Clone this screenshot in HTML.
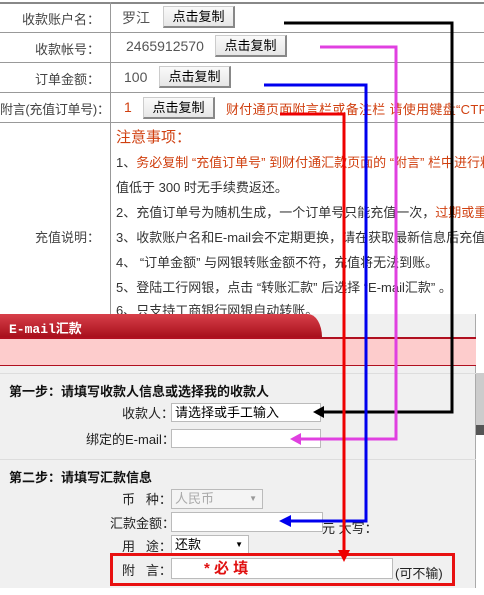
<!DOCTYPE html>
<html><head><meta charset="utf-8"><style>
*{margin:0;padding:0;box-sizing:border-box}
body{width:484px;height:595px;overflow:hidden;background:#fff;position:relative;font-family:"Liberation Sans","Noto Sans CJK SC","WenQuanYi Zen Hei",sans-serif;font-size:12px;color:#333}
.a{position:absolute;white-space:nowrap}
.hl{position:absolute;height:1px;background:#999;left:0;width:484px}
.btn{position:absolute;height:22px;width:72px;background:linear-gradient(#fafafa,#e6e6e6);border:1px solid #ccc;border-right:2px solid #888;border-bottom:2px solid #888;font-size:13px;color:#000;text-align:center;line-height:19px}
.lbl{position:absolute;right:384px;font-size:13px;color:#444;white-space:nowrap}
.r{color:#d04010}
.inp{position:absolute;background:#fff;border:1px solid #bbb;height:19px;font-size:13px;line-height:17px;padding-left:3px;color:#000;white-space:nowrap}
.l2{position:absolute;font-size:13px;color:#222;white-space:nowrap}
.n{font-size:13px}
</style></head><body>
<div class="hl" style="top:2px;background:#888;height:2px"></div>
<div class="hl" style="top:32px"></div>
<div class="hl" style="top:62px"></div>
<div class="hl" style="top:92px"></div>
<div class="hl" style="top:122px"></div>
<div style="position:absolute;left:110px;top:2px;width:1px;height:312px;background:#999"></div>
<div class="lbl" style="top:9px">收款账户名：</div>
<div class="lbl" style="top:39px">收款帐号：</div>
<div class="lbl" style="top:69px">订单金额：</div>
<div class="a" style="left:0;top:99px;font-size:13px;color:#444;letter-spacing:-0.3px">附言(充值订单号)：</div>
<div class="lbl" style="top:227px">充值说明：</div>
<div class="a" style="left:122px;top:8px;font-size:14px;color:#555">罗江</div>
<div class="btn" style="left:163px;top:6px">点击复制</div>
<div class="a" style="left:126px;top:38px;font-size:14px;color:#555">2465912570</div>
<div class="btn" style="left:215px;top:35px">点击复制</div>
<div class="a" style="left:124px;top:69px;font-size:14px;color:#555">100</div>
<div class="btn" style="left:159px;top:66px">点击复制</div>
<div class="a r" style="left:124px;top:99px;font-size:14px">1</div>
<div class="btn" style="left:143px;top:97px">点击复制</div>
<div class="a r" style="left:226px;top:99px;font-size:13px;letter-spacing:0.3px">财付通页面附言栏或备注栏 请使用键盘“CTRL+V”</div>
<div class="a r" style="left:116px;top:126px;font-size:15px">注意事项：</div>
<div class="a n" style="left:116px;top:152px">1、<span class="r">务必复制 “充值订单号” 到财付通汇款页面的 “附言” 栏中进行粘贴</span></div>
<div class="a n" style="left:116px;top:177px">值低于 300 时无手续费返还。</div>
<div class="a n" style="left:116px;top:202px">2、充值订单号为随机生成，一个订单号只能充值一次，<span class="r">过期或重复使用</span></div>
<div class="a n" style="left:116px;top:227px">3、收款账户名和E-mail会不定期更换，请在获取最新信息后充值，否则</div>
<div class="a n" style="left:116px;top:252px">4、 “订单金额” 与网银转账金额不符，充值将无法到账。</div>
<div class="a n" style="left:116px;top:277px">5、登陆工行网银，点击 “转账汇款” 后选择 “E-mail汇款” 。</div>
<div class="a n" style="left:116px;top:300px">6、只支持工商银行网银自动转账。</div>

<div style="position:absolute;left:0;top:314px;width:476px;height:274px;background:#f0f0f0;border-right:1px solid #aaa"></div>
<div style="position:absolute;left:476px;top:373px;width:8px;height:52px;background:#ccc"></div>
<div style="position:absolute;left:476px;top:425px;width:8px;height:10px;background:#555"></div>
<div style="position:absolute;left:0;top:314px;width:322px;height:23px;background:linear-gradient(#d8404a,#a8101c);border-top-right-radius:14px 23px"></div>
<div class="a" style="left:9px;top:318px;color:#fff;font-weight:bold;font-size:13px;font-family:'Liberation Mono','Noto Sans CJK SC',monospace">E-mail汇款</div>
<div style="position:absolute;left:0;top:337px;width:476px;height:29px;background:#fdcccc;border-top:2px solid #b01020;border-bottom:1px solid #b01020"></div>
<div style="position:absolute;left:0;top:373px;width:476px;height:1px;background:#ddd"></div>
<div class="a" style="left:9px;top:381px;font-weight:bold;font-size:13px;color:#111">第一步：请填写收款人信息或选择我的收款人</div>
<div class="l2" style="left:122px;top:403px">收款人：</div>
<div class="inp" style="left:171px;top:403px;width:150px">请选择或手工输入</div>
<div class="l2" style="left:86px;top:429px">绑定的E-mail：</div>
<div class="inp" style="left:171px;top:429px;width:150px"></div>
<div style="position:absolute;left:0;top:459px;width:476px;height:1px;background:#ddd"></div>
<div class="a" style="left:9px;top:467px;font-weight:bold;font-size:13px;color:#111">第二步：请填写汇款信息</div>
<div class="l2" style="left:122px;top:489px">币&nbsp;&nbsp;&nbsp;种：</div>
<div class="inp" style="left:171px;top:489px;width:92px;height:20px;color:#aaa;background:#f4f4f4">人民币 <span style="position:absolute;right:5px;font-size:8px;color:#999">▼</span></div>
<div class="l2" style="left:110px;top:513px">汇款金额：</div>
<div class="inp" style="left:171px;top:512px;width:152px;height:20px"></div>
<div class="l2" style="left:322px;top:518px">元 大写：</div>
<div class="l2" style="left:122px;top:536px">用&nbsp;&nbsp;&nbsp;途：</div>
<div class="inp" style="left:171px;top:535px;width:78px;height:20px">还款 <span style="position:absolute;right:5px;font-size:8px;color:#000">▼</span></div>
<div style="position:absolute;left:110px;top:553px;width:345px;height:33px;border:3px solid #e81010"></div>
<div class="l2" style="left:122px;top:560px">附&nbsp;&nbsp;&nbsp;言：</div>
<div class="inp" style="left:171px;top:558px;width:222px;height:21px;color:#e01010;font-weight:bold;font-size:15px;padding-left:32px;line-height:19px">* 必 填</div>
<div class="l2" style="left:395px;top:563px">(可不输)</div>

<svg width="484" height="595" style="position:absolute;left:0;top:0">
<polyline points="284,23 452,23 452,412 322,412" fill="none" stroke="#000" stroke-width="3"/>
<polygon points="313,412 324,406 324,418" fill="#000"/>
<polyline points="320,47 396,47 396,439 300,439" fill="none" stroke="#e040e0" stroke-width="3"/>
<polygon points="290,439 301,433 301,445" fill="#e040e0"/>
<polyline points="264,85 366,85 366,521 290,521" fill="none" stroke="#0000ee" stroke-width="3"/>
<polygon points="279,521 291,515 291,527" fill="#0000ee"/>
<polyline points="280,114 344,114 344,552" fill="none" stroke="#ee0000" stroke-width="3"/>
<polygon points="344,562 338,550 350,550" fill="#ee0000"/>
</svg>
</body></html>
